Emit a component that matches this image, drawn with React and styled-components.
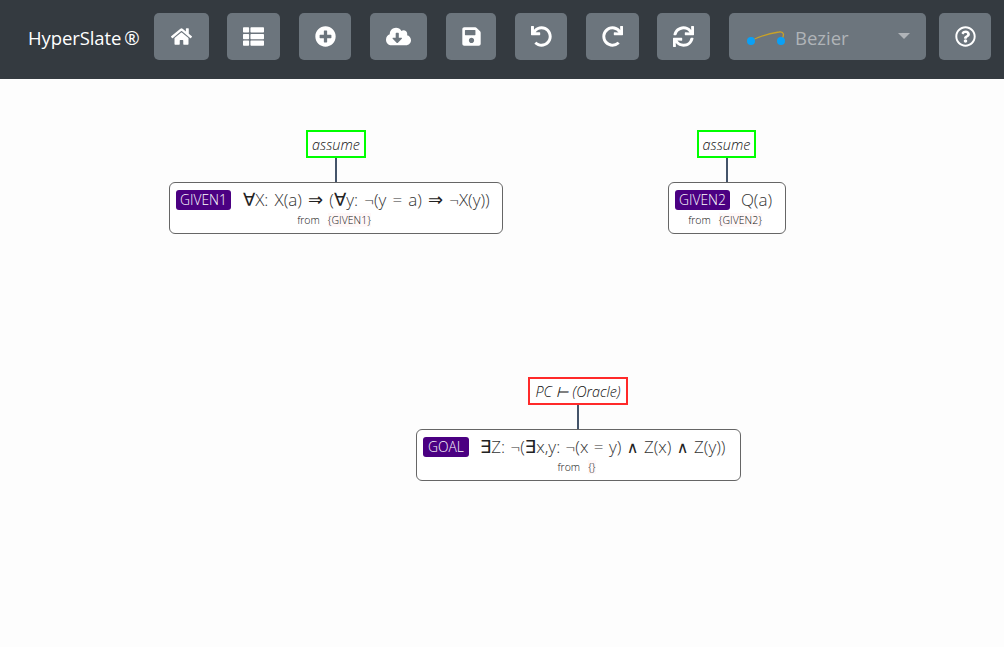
import React from 'react';
import styled, { createGlobalStyle } from 'styled-components';
import {
    FaHome,
    FaThList,
    FaPlusCircle,
    FaCloudDownloadAlt,
    FaSave,
    FaUndo,
    FaRedo,
    FaSync,
    FaRegQuestionCircle,
} from 'react-icons/fa';

const GlobalStyle = createGlobalStyle`
    html, body {
        margin: 0;
        padding: 0;
        background: #fdfdfd;
        font-family: "Open Sans", "Noto Sans", sans-serif;
    }
`;

const Page = styled.div`
    width: 1004px;
    height: 647px;
    overflow: hidden;
    display: flex;
    flex-direction: column;
`;

const Toolbar = styled.div`
    flex: none;
    height: 79px;
    box-sizing: border-box;
    padding: 13px 0 0 28px;
    background: #343a40;
    display: flex;
    align-items: flex-start;
`;

const Brand = styled.div`
    width: 126px;
    height: 47px;
    line-height: 49px;
    color: #fff;
    font-size: 18.5px;
    white-space: nowrap;
    letter-spacing: -0.1px;
`;

const Registered = styled.span`
    margin-left: 3px;
`;

const ToolButton = styled.button`
    flex: none;
    width: ${(props) => props.$width}px;
    height: 47px;
    margin-right: ${(props) => props.$gap}px;
    padding: 0;
    border: 0;
    border-radius: 5px;
    background: #6c757d;
    color: #fff;
    font-size: 21px;
    display: flex;
    align-items: center;
    justify-content: center;
`;

const Select = styled.div`
    flex: none;
    width: 197px;
    height: 47px;
    margin-right: 13px;
    border-radius: 5px;
    background: #6c757d;
    position: relative;
    display: flex;
    align-items: center;
    box-sizing: border-box;
    padding-left: 18px;
`;

const SelectLabel = styled.span`
    margin-left: 8px;
    margin-top: 2px;
    color: #b0b4b8;
    font-size: 18.5px;
`;

const Caret = styled.span`
    position: absolute;
    left: 169px;
    top: 20px;
    width: 0;
    height: 0;
    border-left: 6px solid transparent;
    border-right: 6px solid transparent;
    border-top: 6px solid #b0b4b8;
`;

const Canvas = styled.div`
    flex: 1;
    position: relative;
    background: #fdfdfd;
`;

const Tree = styled.div`
    position: absolute;
    left: ${(props) => props.$x}px;
    top: ${(props) => props.$y}px;
    width: ${(props) => props.$width}px;
    display: flex;
    flex-direction: column;
    align-items: center;
`;

const Justification = styled.div`
    box-sizing: border-box;
    height: 28px;
    padding: 0 ${(props) => props.$pad}px;
    margin-right: ${(props) => props.$shift}px;
    border: 2px solid ${(props) => props.$color};
    background: #fff;
    color: #111;
    font-size: 14.4px;
    font-style: italic;
    font-weight: 300;
    line-height: 25px;
    white-space: nowrap;
`;

const Link = styled.div`
    width: 2px;
    height: 24px;
    margin-right: ${(props) => props.$shift}px;
    background: #44546a;
`;

const Card = styled.div`
    box-sizing: border-box;
    width: 100%;
    height: 52px;
    border: 1px solid #666;
    border-radius: 6px;
    background: #fff;
    padding-top: 6px;
`;

const FormulaRow = styled.div`
    display: flex;
    align-items: center;
    height: 21px;
    padding-left: 6px;
    white-space: nowrap;
`;

const Badge = styled.span`
    flex: none;
    height: 20px;
    padding: 0 ${(props) => props.$pad}px;
    margin-right: ${(props) => props.$gap}px;
    border-radius: 3px;
    background: #4b0082;
    color: #fff;
    font-size: 13.8px;
    font-weight: 300;
    line-height: 20px;
`;

const Formula = styled.span`
    color: #333;
    font-size: 17px;
    font-weight: 300;
    word-spacing: ${(props) => props.$wordGap}px;
`;

const Premises = styled.div`
    margin-top: 3px;
    padding-right: 4px;
    text-align: center;
    color: #111;
    font-size: 10.5px;
    font-weight: 300;
    line-height: 15px;
    white-space: nowrap;
`;

const PremiseSet = styled.span`
    margin-left: 8px;
    background: #fff8f8;
`;

const Symbol = styled.span`
    font-family: "DejaVu Sans", sans-serif;
    font-size: ${(props) => props.$size || 18}px;
    font-weight: 400;
    color: #222;
`;

function CurveIcon() {
    return (
        <svg width="40" height="20" viewBox="0 0 40 20">
            <path
                d="M4 14 C14 8 26 6 32 5 C37 4 38 8 34 14"
                fill="none"
                stroke="#c9a227"
                strokeWidth="1.3"
            />
            <circle cx="4" cy="14" r="4" fill="#0aa0f5" />
            <circle cx="34" cy="14" r="4" fill="#0aa0f5" />
        </svg>
    );
}

const buttons = [
    { icon: <FaHome />, width: 55, gap: 18 },
    { icon: <FaThList />, width: 53, gap: 19 },
    { icon: <FaPlusCircle />, width: 52, gap: 19 },
    { icon: <FaCloudDownloadAlt size={25} />, width: 57, gap: 19 },
    { icon: <FaSave />, width: 50, gap: 19 },
    { icon: <FaUndo />, width: 52, gap: 19 },
    { icon: <FaRedo />, width: 53, gap: 18 },
    { icon: <FaSync />, width: 53, gap: 19 },
];

const nodes = [
    {
        x: 169,
        y: 51,
        width: 334,
        label: 'assume',
        color: '#00ff00',
        pad: 4,
        shift: 0,
        name: 'GIVEN1',
        badgePad: 4,
        gap: 12,
        wordGap: 1.7,
        formula: (
            <>
                <Symbol>∀</Symbol>X: X(a) <Symbol>⇒</Symbol> (<Symbol>∀</Symbol>y: ¬(y = a){' '}
                <Symbol>⇒</Symbol> ¬X(y))
            </>
        ),
        from: '{GIVEN1}',
    },
    {
        x: 668,
        y: 51,
        width: 118,
        label: 'assume',
        color: '#00ff00',
        pad: 4,
        shift: 1,
        name: 'GIVEN2',
        badgePad: 4,
        gap: 11,
        wordGap: 0,
        formula: 'Q(a)',
        from: '{GIVEN2}',
    },
    {
        x: 416,
        y: 298,
        width: 325,
        label: 'PC ⊢ (Oracle)',
        color: '#ff2a2a',
        pad: 5,
        shift: 1,
        name: 'GOAL',
        badgePad: 5,
        gap: 11,
        wordGap: 1,
        formula: (
            <>
                <Symbol>∃</Symbol>Z: ¬(<Symbol>∃</Symbol>x,y: ¬(x = y) <Symbol $size={16}>∧</Symbol> Z(x){' '}
                <Symbol $size={16}>∧</Symbol> Z(y))
            </>
        ),
        from: '{}',
    },
];

function App() {
    return (
        <Page>
            <GlobalStyle />
            <Toolbar>
                <Brand>
                    HyperSlate<Registered>®</Registered>
                </Brand>
                {buttons.map((item, i) => (
                    <ToolButton key={i} $width={item.width} $gap={item.gap}>
                        {item.icon}
                    </ToolButton>
                ))}
                <Select>
                    <CurveIcon />
                    <SelectLabel>Bezier</SelectLabel>
                    <Caret />
                </Select>
                <ToolButton $width={52} $gap={0}>
                    <FaRegQuestionCircle />
                </ToolButton>
            </Toolbar>
            <Canvas>
                {nodes.map((node) => (
                    <Tree key={node.name} $x={node.x} $y={node.y} $width={node.width}>
                        <Justification $color={node.color} $pad={node.pad} $shift={node.shift}>
                            {node.label}
                        </Justification>
                        <Link $shift={node.shift} />
                        <Card>
                            <FormulaRow>
                                <Badge $pad={node.badgePad} $gap={node.gap}>
                                    {node.name}
                                </Badge>
                                <Formula $wordGap={node.wordGap}>{node.formula}</Formula>
                            </FormulaRow>
                            <Premises>
                                from<PremiseSet>{node.from}</PremiseSet>
                            </Premises>
                        </Card>
                    </Tree>
                ))}
            </Canvas>
        </Page>
    );
}

export default App;
